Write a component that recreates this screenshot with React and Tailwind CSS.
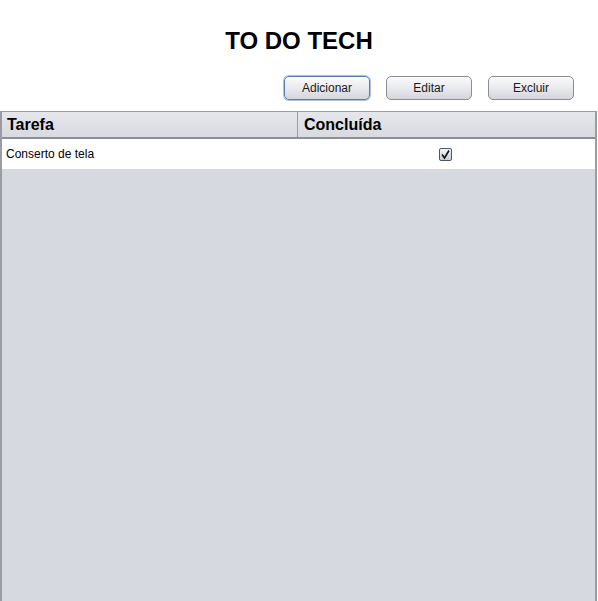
import React from "react";

function NimbusButton({ label, focused }) {
    return (
        <button
            className={
                "w-[86px] h-[24px] rounded-[5px] text-[12px] text-[#1a1a1a] bg-gradient-to-b from-[#fbfbfc] via-[#e9eaee] to-[#d3d6dc] " +
                (focused
                    ? "border border-[#5b7fa8] shadow-[0_0_0_1px_#a9c1dc]"
                    : "border border-[#8a8d94]")
            }
        >
            {label}
        </button>
    );
}

export default function App() {
    return (
        <div className="w-[598px] h-[601px] bg-white flex flex-col overflow-hidden" style={{ fontFamily: '"Liberation Sans", Arial, sans-serif' }}>
            <div className="h-[72px] flex items-end justify-center pb-[19px]">
                <h1 className="text-[24px] font-bold text-black leading-none">TO DO TECH</h1>
            </div>
            <div className="flex justify-end gap-4 pr-[24px] pt-[4px] h-[39px]">
                <NimbusButton label="Adicionar" focused />
                <NimbusButton label="Editar" />
                <NimbusButton label="Excluir" />
            </div>
            <div className="flex-1 w-[597px] border-l-2 border-r-2 border-t border-[#9a9ca3] bg-[#d6d9e0] flex flex-col">
                <div className="flex h-[27px] bg-gradient-to-b from-[#e6e7eb] to-[#d8dae0] border-b-2 border-[#8e9097]">
                    <div className="w-[296px] border-r border-[#9a9ca3] flex items-center pl-[5px] text-[16px] font-bold text-black">Tarefa</div>
                    <div className="flex-1 flex items-center pl-[6px] text-[16px] font-bold text-black">Concluída</div>
                </div>
                <div className="flex h-[30px] bg-white">
                    <div className="w-[296px] flex items-center pl-[4px] text-[12px] text-black">Conserto de tela</div>
                    <div className="flex-1 flex items-center justify-center pr-[2px]">
                        <div className="w-[13px] h-[13px] rounded-[2px] border border-[#4a5566] bg-gradient-to-b from-[#f4f6f9] to-[#c9d0da] flex items-center justify-center">
                            <svg width="11" height="11" viewBox="0 0 11 11">
                                <path d="M2 5.5 L4.5 9 L9 1.5" fill="none" stroke="#111" strokeWidth="1.6" />
                            </svg>
                        </div>
                    </div>
                </div>
            </div>
        </div>
    );
}
